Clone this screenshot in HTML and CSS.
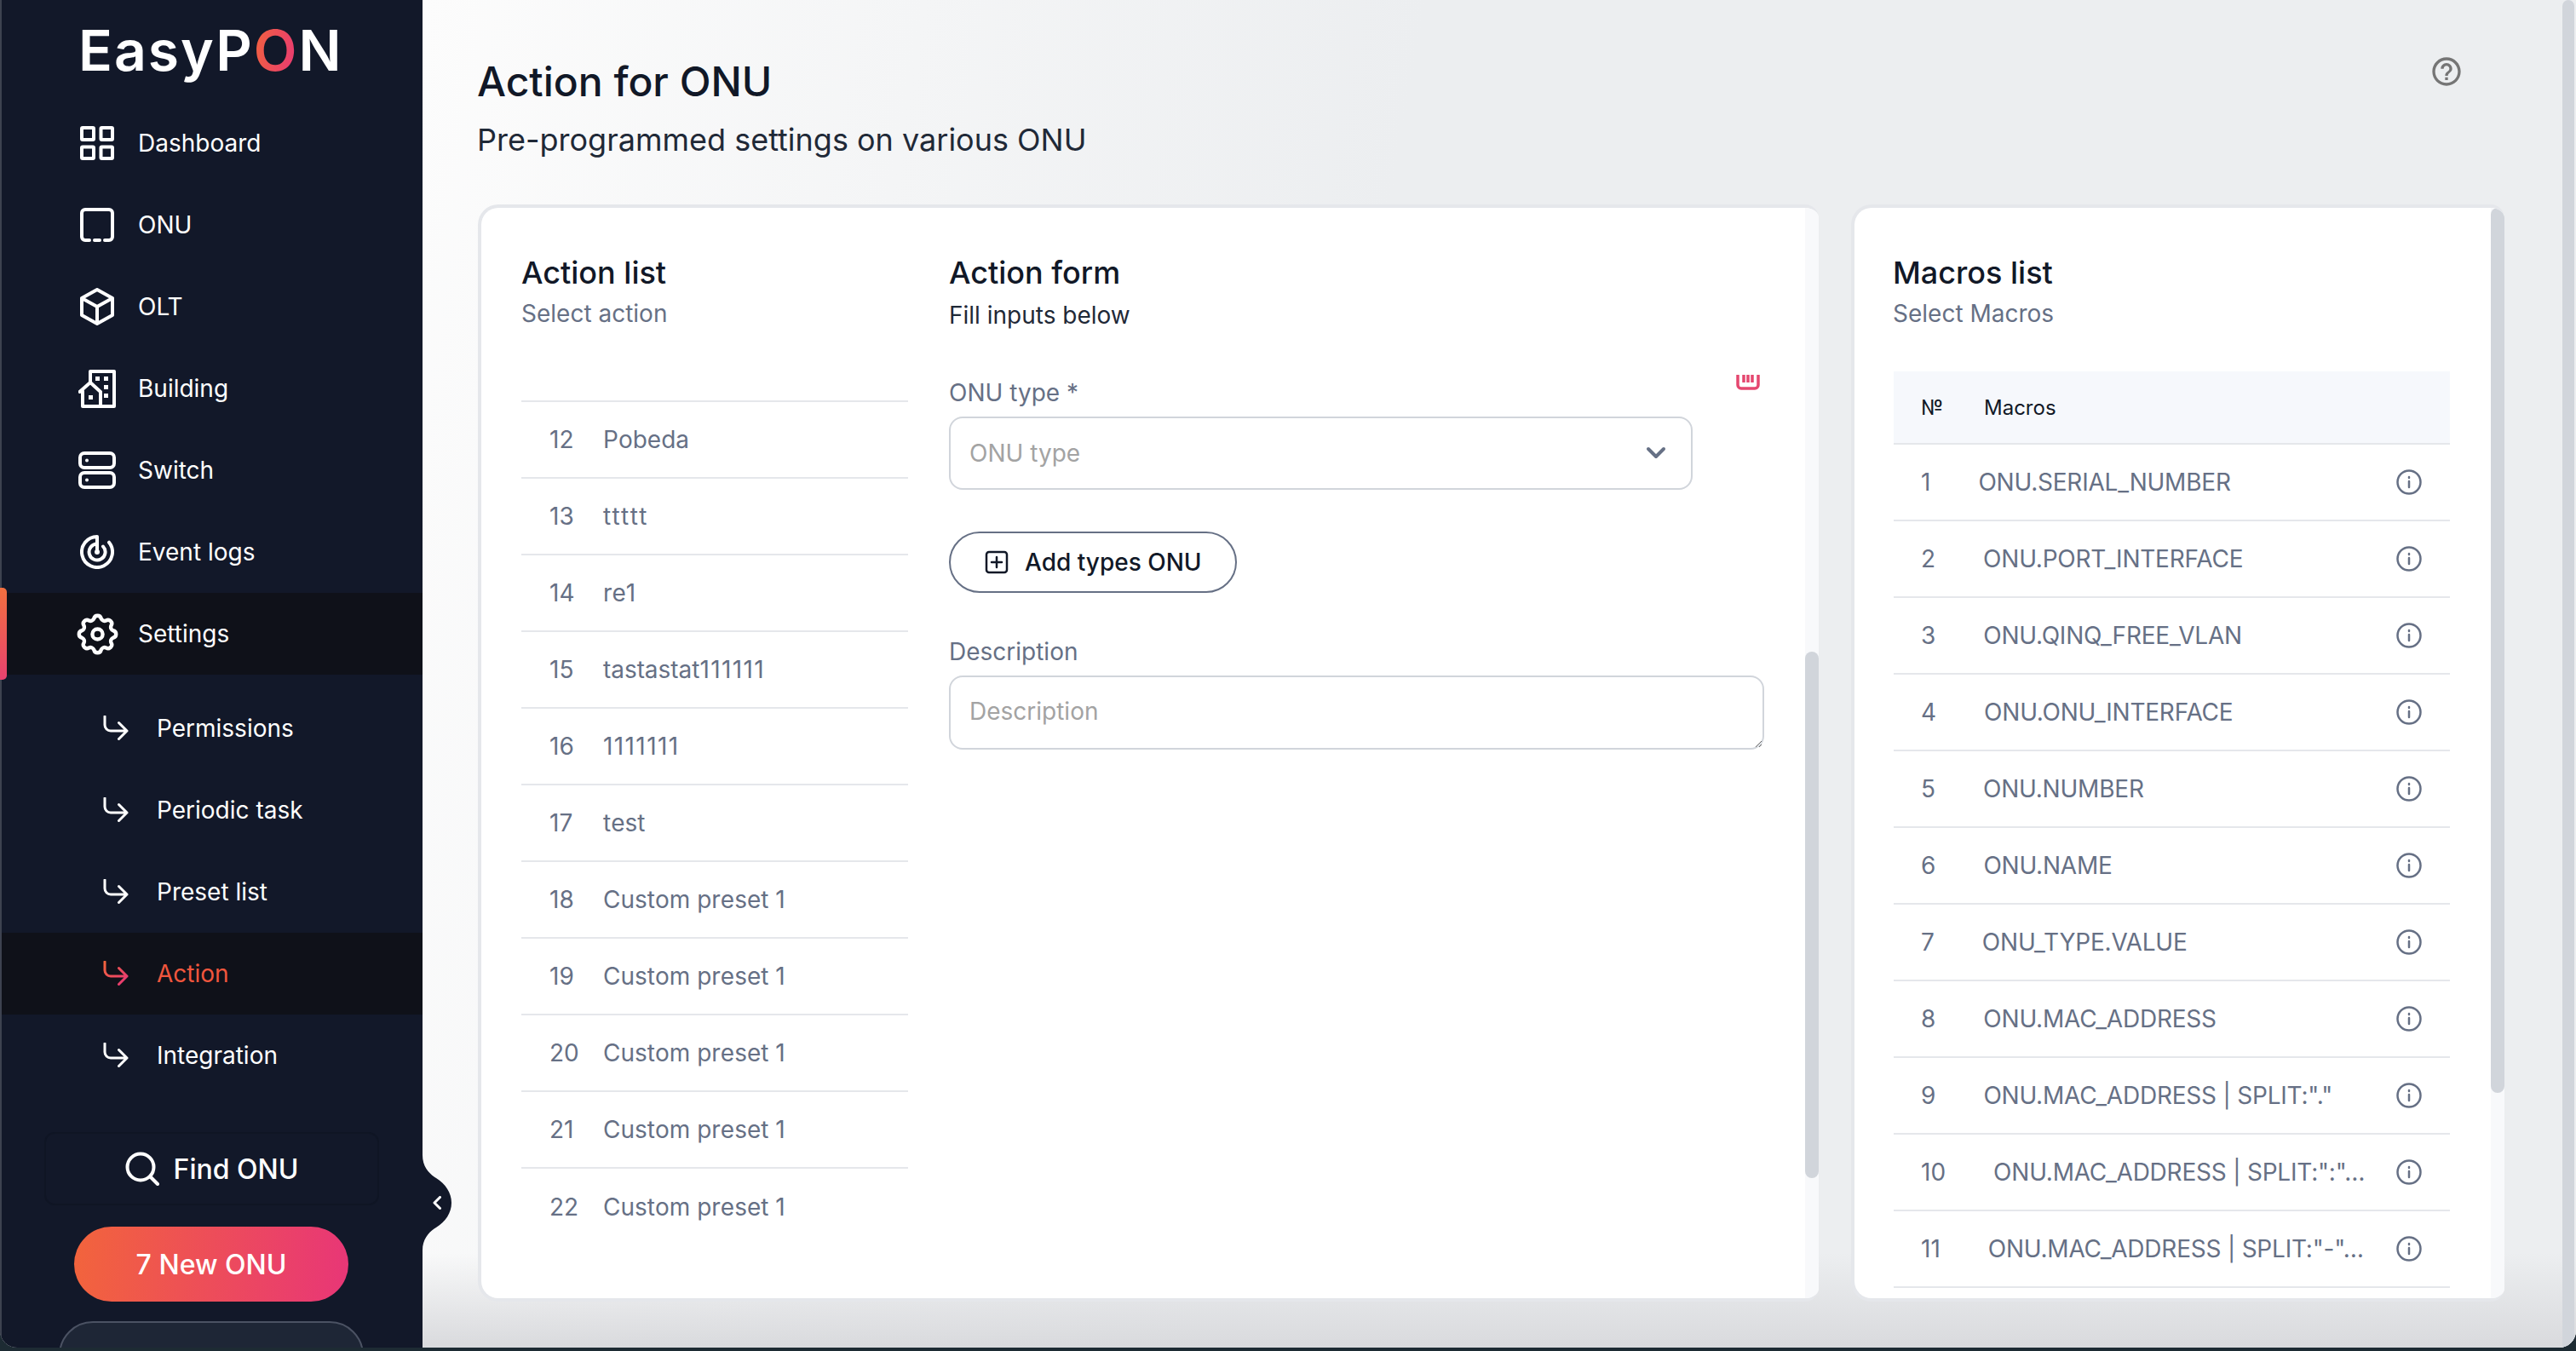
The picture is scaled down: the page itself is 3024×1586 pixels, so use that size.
FILE: index.html
```html
<!DOCTYPE html>
<html lang="en">
<head>
    <meta charset="UTF-8">
    <title>EasyPON - Action for ONU</title>
    <link rel="stylesheet" href="styles.css">
</head>
<body>
    <svg class="defs" width="0" height="0">
        <defs>
            <linearGradient id="brand" x1="0" y1="0" x2="1" y2="1">
                <stop offset="0" stop-color="#f2643c"/>
                <stop offset="1" stop-color="#e83677"/>
            </linearGradient>
        </defs>
    </svg>

    <div class="window">
        <aside class="sidebar">
            <div class="logo">EasyP<span class="logo-o">O</span>N</div>

            <nav class="nav">
                <a class="nav-item">
                    <span class="nav-icon">
                        <svg width="40" height="40" viewBox="0 0 40 40"><rect x="2" y="2" width="14" height="14" rx="1"/><rect x="24.500" y="2" width="13.500" height="14" rx="1"/><rect x="2" y="24.500" width="14" height="13.500" rx="1"/><rect x="24.500" y="24.500" width="13.500" height="13.500" rx="1"/></svg>
                    </span>
                    Dashboard
                </a>
                <a class="nav-item">
                    <span class="nav-icon">
                        <svg width="40" height="40" viewBox="0 0 40 40"><path d="M11 38H6a4 4 0 0 1-4-4V6a4 4 0 0 1 4-4h28a4 4 0 0 1 4 4v28a4 4 0 0 1-4 4h-5M17 38h6"/></svg>
                    </span>
                    ONU
                </a>
                <a class="nav-item">
                    <span class="nav-icon">
                        <svg width="40" height="44" viewBox="0 0 40 44"><path d="M20 2l18 10v20L20 42 2 32V12zM2 12l18 10 18-10M20 22v20"/></svg>
                    </span>
                    OLT
                </a>
                <a class="nav-item">
                    <span class="nav-icon">
                        <svg width="44" height="46" viewBox="0 0 44 46"><path d="M14 16V3h28v41H5V26M1.500 27L14 16l12 11M26 27v17"/><rect class="solid" x="20" y="9" width="5" height="5"/><rect class="solid" x="30" y="9" width="5" height="5"/><rect class="solid" x="30" y="19" width="5" height="5"/><rect class="solid" x="30" y="29" width="5" height="5"/><rect class="solid" x="12" y="31" width="5" height="5"/></svg>
                    </span>
                    Building
                </a>
                <a class="nav-item">
                    <span class="nav-icon">
                        <svg width="44" height="44" viewBox="0 0 44 44"><rect x="2" y="2" width="40" height="17" rx="5"/><rect x="2" y="25" width="40" height="17" rx="5"/><circle class="solid" cx="10" cy="10.500" r="2"/><circle class="solid" cx="10" cy="33.500" r="2"/></svg>
                    </span>
                    Switch
                </a>
                <a class="nav-item">
                    <span class="nav-icon">
                        <svg width="40" height="40" viewBox="0 0 40 40"><path d="M20 2a18 18 0 1 0 14 6.700M20 10.500a9.500 9.500 0 1 0 7 3M20 2v18"/><circle class="solid" cx="20" cy="20" r="3"/></svg>
                    </span>
                    Event logs
                </a>
                <a class="nav-item nav-item-active">
                    <span class="nav-marker"></span>
                    <span class="nav-icon">
                        <svg width="53" height="53" viewBox="0 0 48 48"><path d="M40.560 20.180A3.900 3.900 0 0 1 40.560 27.820A4 4 0 0 0 38.420 33.010A3.900 3.900 0 0 1 33.010 38.420A4 4 0 0 0 27.820 40.560A3.900 3.900 0 0 1 20.180 40.560A4 4 0 0 0 14.990 38.420A3.900 3.900 0 0 1 9.580 33.010A4 4 0 0 0 7.440 27.820A3.900 3.900 0 0 1 7.440 20.180A4 4 0 0 0 9.580 14.990A3.900 3.900 0 0 1 14.990 9.580A4 4 0 0 0 20.180 7.440A3.900 3.900 0 0 1 27.820 7.440A4 4 0 0 0 33.010 9.580A3.900 3.900 0 0 1 38.420 14.990A4 4 0 0 0 40.560 20.180Z"/><circle cx="24" cy="24" r="5.500"/></svg>
                    </span>
                    Settings
                </a>

                <div class="subnav">
                    <a class="sub-item">
                        <svg width="30" height="30" viewBox="0 0 30 30"><path d="M2 1v10a7 7 0 0 0 7 7h19M18.500 8.500L28 18l-9.500 9.500"/></svg>
                        Permissions
                    </a>
                    <a class="sub-item">
                        <svg width="30" height="30" viewBox="0 0 30 30"><path d="M2 1v10a7 7 0 0 0 7 7h19M18.500 8.500L28 18l-9.500 9.500"/></svg>
                        Periodic task
                    </a>
                    <a class="sub-item">
                        <svg width="30" height="30" viewBox="0 0 30 30"><path d="M2 1v10a7 7 0 0 0 7 7h19M18.500 8.500L28 18l-9.500 9.500"/></svg>
                        Preset list
                    </a>
                    <a class="sub-item sub-item-active">
                        <svg width="30" height="30" viewBox="0 0 30 30"><path d="M2 1v10a7 7 0 0 0 7 7h19M18.500 8.500L28 18l-9.500 9.500"/></svg>
                        Action
                    </a>
                    <a class="sub-item">
                        <svg width="30" height="30" viewBox="0 0 30 30"><path d="M2 1v10a7 7 0 0 0 7 7h19M18.500 8.500L28 18l-9.500 9.500"/></svg>
                        Integration
                    </a>
                </div>
            </nav>

            <button class="find-btn">
                <svg width="40" height="40" viewBox="0 0 40 40"><circle cx="18" cy="18" r="15.500"/><path d="M29.500 29.500L38 38"/></svg>
                Find ONU
            </button>
            <button class="new-btn">7 New ONU</button>
            <div class="profile-pill"></div>

            <div class="collapse-handle">
                <svg class="handle-shape" width="34" height="112" viewBox="0 0 34 112"><path d="M0 0C0 14 8 22 16 27C27 34 34 44 34 56C34 68 27 78 16 85C8 90 0 98 0 112Z"/></svg>
                <svg class="handle-arrow" width="10" height="16" viewBox="0 0 10 16"><path d="M8.500 1.500L2 8l6.500 6.500"/></svg>
            </div>
        </aside>

        <main class="main">
            <header class="page-header">
                <div>
                    <h1 class="page-title">Action for ONU</h1>
                    <p class="page-subtitle">Pre-programmed settings on various ONU</p>
                </div>
                <svg class="help-icon" width="40" height="40" viewBox="0 0 24 24"><path d="M11 18h2v-2h-2v2zm1-16C6.480 2 2 6.480 2 12s4.480 10 10 10 10-4.480 10-10S17.520 2 12 2zm0 18c-4.410 0-8-3.590-8-8s3.590-8 8-8 8 3.590 8 8-3.590 8-8 8zm0-14c-2.210 0-4 1.790-4 4h2c0-1.100.9-2 2-2s2 .9 2 2c0 2-3 1.750-3 5h2c0-2.250 3-2.500 3-5 0-2.210-1.790-4-4-4z"/></svg>
            </header>

            <div class="cards">
                <section class="card card-action">
                    <div class="action-list">
                        <h2 class="card-title">Action list</h2>
                        <p class="card-subtitle">Select action</p>
                        <div class="list-scroll">
                            <div class="list-row list-row-first"><span class="list-num">11</span><span>gpy</span></div>
                            <div class="list-row"><span class="list-num">12</span><span>Pobeda</span></div>
                            <div class="list-row"><span class="list-num">13</span><span class="loose">ttttt</span></div>
                            <div class="list-row"><span class="list-num">14</span><span>re1</span></div>
                            <div class="list-row"><span class="list-num">15</span><span>tastastat<span class="loose">111111</span></span></div>
                            <div class="list-row"><span class="list-num">16</span><span class="loose">1111111</span></div>
                            <div class="list-row"><span class="list-num">17</span><span>test</span></div>
                            <div class="list-row"><span class="list-num">18</span><span>Custom preset 1</span></div>
                            <div class="list-row"><span class="list-num">19</span><span>Custom preset 1</span></div>
                            <div class="list-row"><span class="list-num">20</span><span>Custom preset 1</span></div>
                            <div class="list-row"><span class="list-num">21</span><span>Custom preset 1</span></div>
                            <div class="list-row list-row-last"><span class="list-num">22</span><span>Custom preset 1</span></div>
                        </div>
                    </div>

                    <div class="action-form">
                        <h2 class="card-title">Action form</h2>
                        <p class="card-subtitle card-subtitle-dark">Fill inputs below</p>

                        <div class="label-row">
                            <label class="field-label">ONU type *</label>
                            <svg class="trash-icon" width="28" height="18" viewBox="0 0 28 18"><path d="M2 0v12a4 4 0 0 0 4 4h16a4 4 0 0 0 4-4V0M9 0v9M14 0v9M19 0v9"/></svg>
                        </div>
                        <div class="select-box">
                            <span class="placeholder">ONU type</span>
                            <svg width="26" height="16" viewBox="0 0 26 16"><path d="M4 3l9 9 9-9"/></svg>
                        </div>

                        <button class="add-btn">
                            <svg width="28" height="28" viewBox="0 0 28 28"><rect x="2" y="2" width="24" height="24" rx="3"/><path d="M14 8v12M8 14h12"/></svg>
                            Add types ONU
                        </button>

                        <label class="field-label field-label-desc">Description</label>
                        <textarea class="desc-input" placeholder="Description"></textarea>
                    </div>

                    <div class="scroll-track"><div class="scroll-thumb scroll-thumb-action"></div></div>
                </section>

                <section class="card card-macros">
                    <h2 class="card-title">Macros list</h2>
                    <p class="card-subtitle">Select Macros</p>

                    <div class="macros-table">
                        <div class="macros-head"><span class="macros-head-num">№</span><span>Macros</span></div>
                        <div class="macro-row"><span class="macro-num">1</span><span class="macro-name">ONU.SERIAL_NUMBER</span><svg class="info-icon" width="30" height="30" viewBox="0 0 30 30"><circle cx="15" cy="15" r="13.500"/><path d="M15 14v7M15 9v1"/></svg></div>
                        <div class="macro-row"><span class="macro-num">2</span><span class="macro-name">ONU.PORT_INTERFACE</span><svg class="info-icon" width="30" height="30" viewBox="0 0 30 30"><circle cx="15" cy="15" r="13.500"/><path d="M15 14v7M15 9v1"/></svg></div>
                        <div class="macro-row"><span class="macro-num">3</span><span class="macro-name">ONU.QINQ_FREE_VLAN</span><svg class="info-icon" width="30" height="30" viewBox="0 0 30 30"><circle cx="15" cy="15" r="13.500"/><path d="M15 14v7M15 9v1"/></svg></div>
                        <div class="macro-row"><span class="macro-num">4</span><span class="macro-name">ONU.ONU_INTERFACE</span><svg class="info-icon" width="30" height="30" viewBox="0 0 30 30"><circle cx="15" cy="15" r="13.500"/><path d="M15 14v7M15 9v1"/></svg></div>
                        <div class="macro-row"><span class="macro-num">5</span><span class="macro-name">ONU.NUMBER</span><svg class="info-icon" width="30" height="30" viewBox="0 0 30 30"><circle cx="15" cy="15" r="13.500"/><path d="M15 14v7M15 9v1"/></svg></div>
                        <div class="macro-row"><span class="macro-num">6</span><span class="macro-name">ONU.NAME</span><svg class="info-icon" width="30" height="30" viewBox="0 0 30 30"><circle cx="15" cy="15" r="13.500"/><path d="M15 14v7M15 9v1"/></svg></div>
                        <div class="macro-row"><span class="macro-num">7</span><span class="macro-name">ONU_TYPE.VALUE</span><svg class="info-icon" width="30" height="30" viewBox="0 0 30 30"><circle cx="15" cy="15" r="13.500"/><path d="M15 14v7M15 9v1"/></svg></div>
                        <div class="macro-row"><span class="macro-num">8</span><span class="macro-name">ONU.MAC_ADDRESS</span><svg class="info-icon" width="30" height="30" viewBox="0 0 30 30"><circle cx="15" cy="15" r="13.500"/><path d="M15 14v7M15 9v1"/></svg></div>
                        <div class="macro-row"><span class="macro-num">9</span><span class="macro-name">ONU.MAC_ADDRESS | SPLIT:"."</span><svg class="info-icon" width="30" height="30" viewBox="0 0 30 30"><circle cx="15" cy="15" r="13.500"/><path d="M15 14v7M15 9v1"/></svg></div>
                        <div class="macro-row"><span class="macro-num">10</span><span class="macro-name">ONU.MAC_ADDRESS | SPLIT:":"…</span><svg class="info-icon" width="30" height="30" viewBox="0 0 30 30"><circle cx="15" cy="15" r="13.500"/><path d="M15 14v7M15 9v1"/></svg></div>
                        <div class="macro-row"><span class="macro-num">11</span><span class="macro-name">ONU.MAC_ADDRESS | SPLIT:"-"…</span><svg class="info-icon" width="30" height="30" viewBox="0 0 30 30"><circle cx="15" cy="15" r="13.500"/><path d="M15 14v7M15 9v1"/></svg></div>
                    </div>

                    <div class="scroll-track"><div class="scroll-thumb scroll-thumb-macros"></div></div>
                </section>
            </div>

            <div class="page-scrollbar"></div>
        </main>
    </div>
</body>
</html>
```

FILE: styles.css
```css
* {
    box-sizing: border-box;
}

html,
body {
    margin: 0;
    height: 1586px;
    overflow: hidden;
}

body {
    background-color: #1d2b33;
    font-family: Inter, "Noto Sans", sans-serif;
}

.defs {
    position: absolute;
}

.window {
    display: flex;
    height: 1582px;
    overflow: hidden;
    border-radius: 0 0 20px 20px;
    background-color: #eceef0;
}

/* Sidebar */
.sidebar {
    position: relative;
    z-index: 1;
    flex: 0 0 496px;
    display: flex;
    flex-direction: column;
    border-left: 2px solid #3d4250;
    background-color: #121829;
    color: #fff;
}

.sidebar > * {
    flex: none;
}

.logo {
    height: 120px;
    padding: 21px 0 0 90px;
    font-size: 66px;
    line-height: 76px;
    font-weight: 600;
    letter-spacing: 2px;
}

.logo-o {
    background: linear-gradient(100deg, #f2643c, #e83677);
    -webkit-background-clip: text;
    background-clip: text;
    color: transparent;
}

.nav-item {
    position: relative;
    display: flex;
    align-items: center;
    height: 96px;
    padding-left: 88px;
    font-size: 28px;
    font-weight: 400;
}

.nav-item-active {
    background-color: #0f1119;
}

.nav-marker {
    position: absolute;
    left: -2px;
    top: -6px;
    width: 8px;
    height: 108px;
    border-radius: 0 5px 5px 0;
    background: linear-gradient(180deg, #f2703f, #e8426f);
}

.nav-icon {
    flex: 0 0 48px;
    min-width: 0;
    display: flex;
    align-items: center;
    justify-content: center;
    margin-right: 24px;
}

.nav-icon svg,
.sub-item svg,
.find-btn svg {
    flex: none;
    fill: none;
    stroke: #fff;
    stroke-width: 4;
    stroke-linecap: round;
    stroke-linejoin: round;
}

.nav-icon svg .solid {
    fill: #fff;
    stroke: none;
}

.subnav {
    margin-top: 15px;
}

.sub-item {
    display: flex;
    align-items: center;
    gap: 33px;
    height: 96px;
    padding-left: 119px;
    font-size: 28px;
}

.sub-item svg {
    stroke-width: 3;
}

.sub-item-active {
    background-color: #0f1119;
    color: #f0563d;
}

.sub-item-active svg {
    stroke: url(#brand);
}

.find-btn {
    display: flex;
    align-items: center;
    justify-content: center;
    gap: 17px;
    width: 393px;
    height: 86px;
    margin: 42px 0 0 50px;
    border: 2px solid #0f1524;
    border-radius: 12px;
    background-color: #121829;
    color: #fff;
    font-family: inherit;
    font-size: 32px;
    font-weight: 500;
}

.new-btn {
    width: 322px;
    height: 88px;
    margin: 25px 0 0 85px;
    border: none;
    border-radius: 44px;
    background: linear-gradient(95deg, #f2643c, #e83677);
    color: #fff;
    font-family: inherit;
    font-size: 32px;
    font-weight: 500;
}

.profile-pill {
    width: 358px;
    height: 80px;
    margin: 23px 0 0 67px;
    border: 2px solid #4b5263;
    border-radius: 40px;
    background-color: #1e2636;
}

.collapse-handle {
    position: absolute;
    left: 494px;
    top: 1356px;
    width: 34px;
    height: 112px;
}

.handle-shape {
    display: block;
    fill: #121829;
}

.handle-arrow {
    position: absolute;
    left: 12px;
    top: 48px;
    fill: none;
    stroke: #fff;
    stroke-width: 3;
    stroke-linecap: round;
    stroke-linejoin: round;
}

/* Main area */
.main {
    position: relative;
    flex: 1;
    min-width: 0;
    padding: 67px 0 0 64px;
    background:
        linear-gradient(180deg, rgba(216, 217, 220, 0) 93%, #d9dadd 100%),
        linear-gradient(100deg, #fcfcfc 0%, #eceef0 42%);
}

.page-header {
    display: flex;
    justify-content: space-between;
    align-items: flex-start;
    padding-right: 132px;
}

.page-title {
    margin: 0;
    color: #111827;
    font-size: 48px;
    line-height: 58px;
    font-weight: 500;
}

.page-subtitle {
    margin: 17px 0 0;
    color: #1f2937;
    font-size: 36px;
    line-height: 44px;
}

.help-icon {
    margin-top: -3px;
    fill: #757575;
}

.page-scrollbar {
    position: absolute;
    top: 0;
    right: 2px;
    bottom: 0;
    width: 14px;
    border-radius: 8px 8px 0 0;
    background-color: #d1d5db;
}

.cards {
    display: flex;
    gap: 38px;
    height: 1288px;
    margin-top: 54px;
    margin-left: 1px;
}

.card {
    position: relative;
    overflow: hidden;
    border: 4px solid #e5e7eb;
    border-right: none;
    border-radius: 24px 16px 16px 24px;
    background-color: #fff;
}

.card-action {
    display: flex;
    gap: 48px;
    width: 1574px;
    padding: 53px 0 0 47px;
}

.card-macros {
    width: 767px;
    padding: 53px 0 0 45px;
}

.card-title {
    margin: 0;
    color: #111827;
    font-size: 36px;
    line-height: 46px;
    font-weight: 500;
}

.card-subtitle {
    margin: 7px 0 0;
    color: #667085;
    font-size: 28px;
    line-height: 36px;
}

.card-subtitle-dark {
    margin-top: 9px;
    color: #1f2937;
}

.scroll-track {
    position: absolute;
    top: 0;
    right: 0;
    bottom: 0;
    width: 16px;
    background-color: #f8f9fb;
}

.scroll-thumb {
    border-radius: 8px;
    background-color: #d1d5db;
}

.scroll-thumb-action {
    height: 618px;
    margin-top: 521px;
}

.scroll-thumb-macros {
    height: 1039px;
}

/* Action list */
.action-list {
    flex: 0 0 454px;
}

.list-scroll {
    height: 1083px;
    margin-top: 57px;
    overflow: hidden;
}

.list-row {
    display: flex;
    align-items: center;
    height: 90px;
    padding-left: 33px;
    border-bottom: 2px solid #e5e7eb;
    color: #667085;
    font-size: 28px;
    font-kerning: none;
}

.list-row-first {
    margin-top: -61px;
}

.list-row-last {
    border-bottom: none;
}

.list-num {
    flex: 0 0 63px;
}

.loose {
    letter-spacing: 1.400px;
}

/* Action form */
.action-form {
    flex: 0 0 957px;
}

.label-row {
    display: flex;
    justify-content: space-between;
    align-items: flex-start;
    margin-top: 55px;
}

.field-label {
    display: block;
    color: #667085;
    font-size: 28px;
    line-height: 36px;
}

.field-label-desc {
    margin-top: 51px;
}

.trash-icon {
    margin: -3px 5px 0 0;
    fill: none;
    stroke: #e5476f;
    stroke-width: 3.500;
}

.select-box {
    display: flex;
    align-items: center;
    justify-content: space-between;
    width: 873px;
    height: 86px;
    margin-top: 10px;
    padding: 0 28px 0 22px;
    border: 2px solid #d1d5db;
    border-radius: 16px;
}

.select-box svg {
    fill: none;
    stroke: #667085;
    stroke-width: 4;
    stroke-linecap: round;
    stroke-linejoin: round;
}

.placeholder {
    color: #a3a3a3;
    font-size: 28px;
}

.add-btn {
    display: flex;
    align-items: center;
    gap: 19px;
    height: 72px;
    margin-top: 49px;
    padding: 0 39px 0 40px;
    border: 2px solid #667085;
    border-radius: 36px;
    background-color: #fff;
    color: #111827;
    font-family: inherit;
    font-size: 28px;
    font-weight: 500;
}

.add-btn svg {
    fill: none;
    stroke: #111827;
    stroke-width: 2.500;
    stroke-linecap: round;
}

.desc-input {
    display: block;
    width: 957px;
    height: 87px;
    margin-top: 10px;
    padding: 22px;
    border: 2px solid #d1d5db;
    border-radius: 16px;
    font-family: inherit;
    font-size: 28px;
    line-height: 36px;
    outline: none;
}

.desc-input::placeholder {
    color: #a3a3a3;
}

/* Macros */
.macros-table {
    width: 653px;
    margin: 50px 0 0 1px;
}

.macros-head {
    display: flex;
    align-items: center;
    height: 86px;
    padding-left: 32px;
    border-bottom: 2px solid #e5e7eb;
    background-color: #f6f8fc;
    color: #111827;
    font-size: 24px;
}

.macros-head-num {
    flex: 0 0 74px;
}

.macro-row {
    display: flex;
    align-items: center;
    height: 90px;
    padding: 0 33px 0 32px;
    border-bottom: 2px solid #e5e7eb;
    color: #667085;
    font-size: 28px;
}

.macro-name {
    margin-left: 56px;
    letter-spacing: -0.220px;
    white-space: nowrap;
}

.info-icon {
    flex: none;
    margin-left: auto;
    fill: none;
    stroke: #667085;
    stroke-width: 2.500;
    stroke-linecap: round;
}
```
